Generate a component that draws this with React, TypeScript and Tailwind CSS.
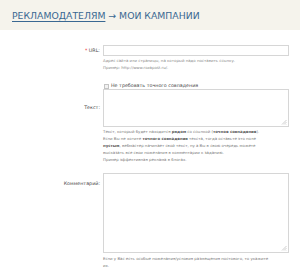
import React from "react";

function Grip() {
  return (
    <svg width="6" height="6" viewBox="0 0 6 6" className="absolute right-[1px] bottom-[1px]">
      <path d="M5.5 1 L1 5.5 M5.5 3 L3 5.5 M5.5 5 L5 5.5" stroke="#b0b0b0" strokeWidth="0.6" />
    </svg>
  );
}

export default function App() {
  return (
    <div className="w-[300px] h-[273px] bg-white overflow-hidden" style={{ fontFamily: '"DejaVu Sans", Verdana, sans-serif' }}>
      <div className="h-[30px] bg-[#f5f3ec] flex items-center pl-[12px]">
        <div className="text-[9.3px] text-[#3a6892] pt-[2px]">
          <span className="underline underline-offset-[1.5px] decoration-[0.7px]">РЕКЛАМОДАТЕЛЯМ</span>
          <span> → МОИ КАМПАНИИ</span>
        </div>
      </div>

      <div className="grid grid-cols-[100px_186px] gap-x-[3px] pt-[15px]">
        {/* URL */}
        <div className="text-right text-[4.8px] text-[#444] leading-[11px]">
          <span className="text-[#e33]">*</span> URL:
        </div>
        <div>
          <div className="h-[11px] border border-[#d6d6d6] bg-white" />
          <div className="text-[3.9px] text-[#888] leading-[7px] mt-[1px]">
            <div>Адрес сайта или страницы, на который надо поставить ссылку.</div>
            <div>Пример: http://www.rozapost.ru/.</div>
          </div>
        </div>

        {/* Text */}
        <div className="text-right text-[4.8px] text-[#444] pt-[33px]">Текст:</div>
        <div className="pt-[12px]">
          <div className="flex items-center gap-[2px] h-[6px]">
            <div className="w-[5px] h-[5px] border border-[#c4c4c4] bg-[#f2f2f2] ml-[1px]" />
            <span className="text-[4.8px] text-[#444]">Не требовать точного совпадения</span>
          </div>
          <div className="relative h-[38px] border border-[#d6d6d6] bg-white">
            <Grip />
          </div>
          <div className="text-[3.9px] text-[#777] leading-[6.9px] mt-[2px]">
            <div>Текст, который будет находится <b className="text-[#555]">рядом</b> со ссылкой (<b className="text-[#555]">точное совпадение</b>).</div>
            <div>Если Вы не хотите <b className="text-[#555]">точного совпадения</b> текста, тогда оставьте это поле</div>
            <div><b className="text-[#555]">пустым</b>, вебмастер начинает свой текст, ну а Вы в свою очередь можете</div>
            <div>высказать все свои пожелания в комментарии к заданию.</div>
            <div>Пример эффективная реклама в блогах.</div>
          </div>
        </div>

        {/* Comment */}
        <div className="text-right text-[4.8px] text-[#444] pt-[16px]">Комментарий:</div>
        <div className="pt-[9px]">
          <div className="relative h-[80px] border border-[#d6d6d6] bg-white">
            <Grip />
          </div>
          <div className="text-[3.9px] text-[#777] leading-[7px] mt-[2px]">
            <div>Если у Вас есть особые пожелания/условия размещения постового, то укажите</div>
            <div>их.</div>
          </div>
        </div>
      </div>
    </div>
  );
}
